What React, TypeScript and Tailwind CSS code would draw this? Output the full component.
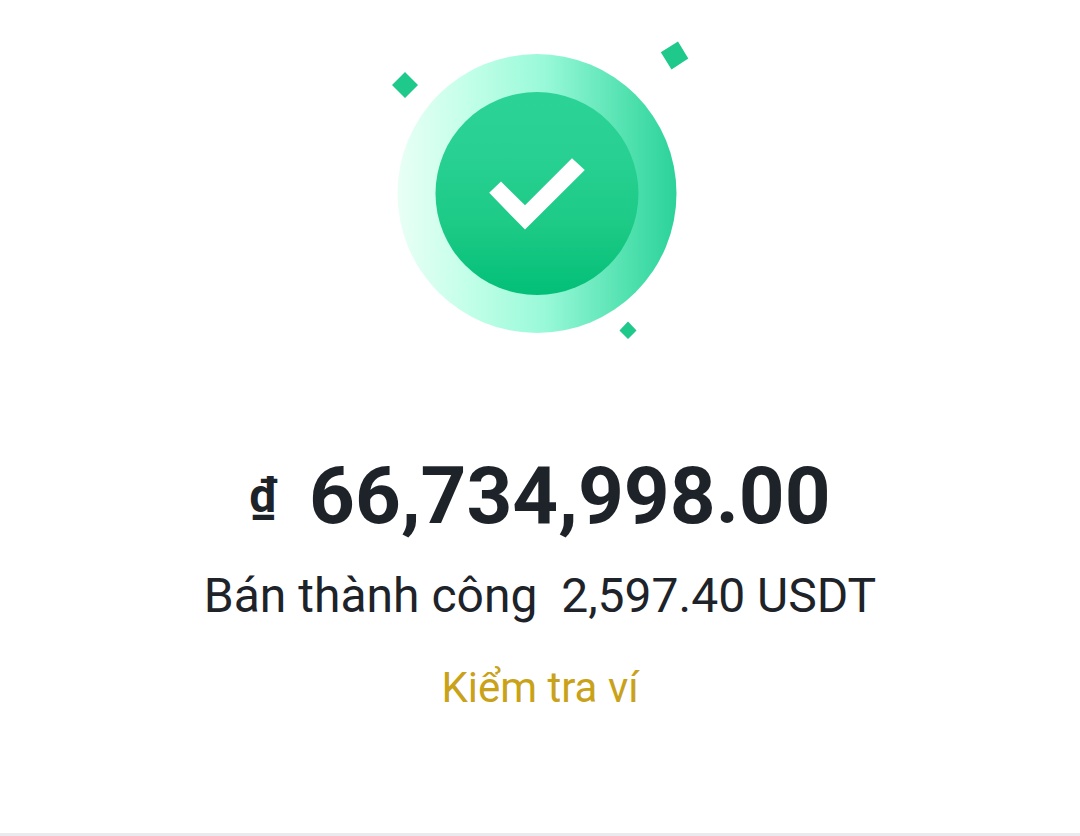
export default function App() {
  return (
    <main className="flex w-full flex-col items-center border-b-3 border-[#e9e9ee] bg-white pt-10 pb-[115px] font-['Roboto',sans-serif] text-[#1e2329]">
      <svg viewBox="390 40 300 300" className="h-[300px] w-[300px]" role="img" aria-label="Thành công">
        <defs>
          <linearGradient id="ring" x1="0" x2="1" y1="0" y2="0">
            <stop offset="0" stopColor="#e9fff6" />
            <stop offset="0.25" stopColor="#c3ffe9" />
            <stop offset="0.53" stopColor="#98f9d8" />
            <stop offset="0.85" stopColor="#4bdfac" />
            <stop offset="1" stopColor="#2bd299" />
          </linearGradient>
          <linearGradient id="disc" x1="0" x2="0" y1="0" y2="1">
            <stop offset="0" stopColor="#2bd396" />
            <stop offset="0.3" stopColor="#28d193" />
            <stop offset="0.65" stopColor="#1dca86" />
            <stop offset="1" stopColor="#02bf77" />
          </linearGradient>
        </defs>
        <circle cx="537" cy="193.5" r="139.5" fill="url(#ring)" />
        <circle cx="537" cy="193.5" r="101.5" fill="url(#disc)" />
        <path d="M489.200 192.800 L501 181.600 L525 205.200 L572 158.300 L584.800 170 L525 229.600Z" fill="#fff" />
        <path d="M405 72 L418 85 L405 98 L392 85Z M678 41.500 L688.300 58.500 L671.500 69.500 L660.800 52.300Z M628 321.500 L636.500 330.500 L628 339 L619.500 330.500Z" fill="#1ec98b" />
      </svg>
      <h1 className="mt-[106px] flex items-center gap-8 text-[80px] leading-[100px] font-bold">
        <span className="text-[48px] leading-[60px]">₫</span>
        <span>66,734,998.00</span>
      </h1>
      <p className="mt-5 text-[48px] leading-[60px] whitespace-pre">Bán thành công  2,597.40 USDT</p>
      <a href="#wallet" className="mt-8 text-[42px] leading-[60px] text-[#c9a21a]">Kiểm tra ví</a>
    </main>
  );
}
